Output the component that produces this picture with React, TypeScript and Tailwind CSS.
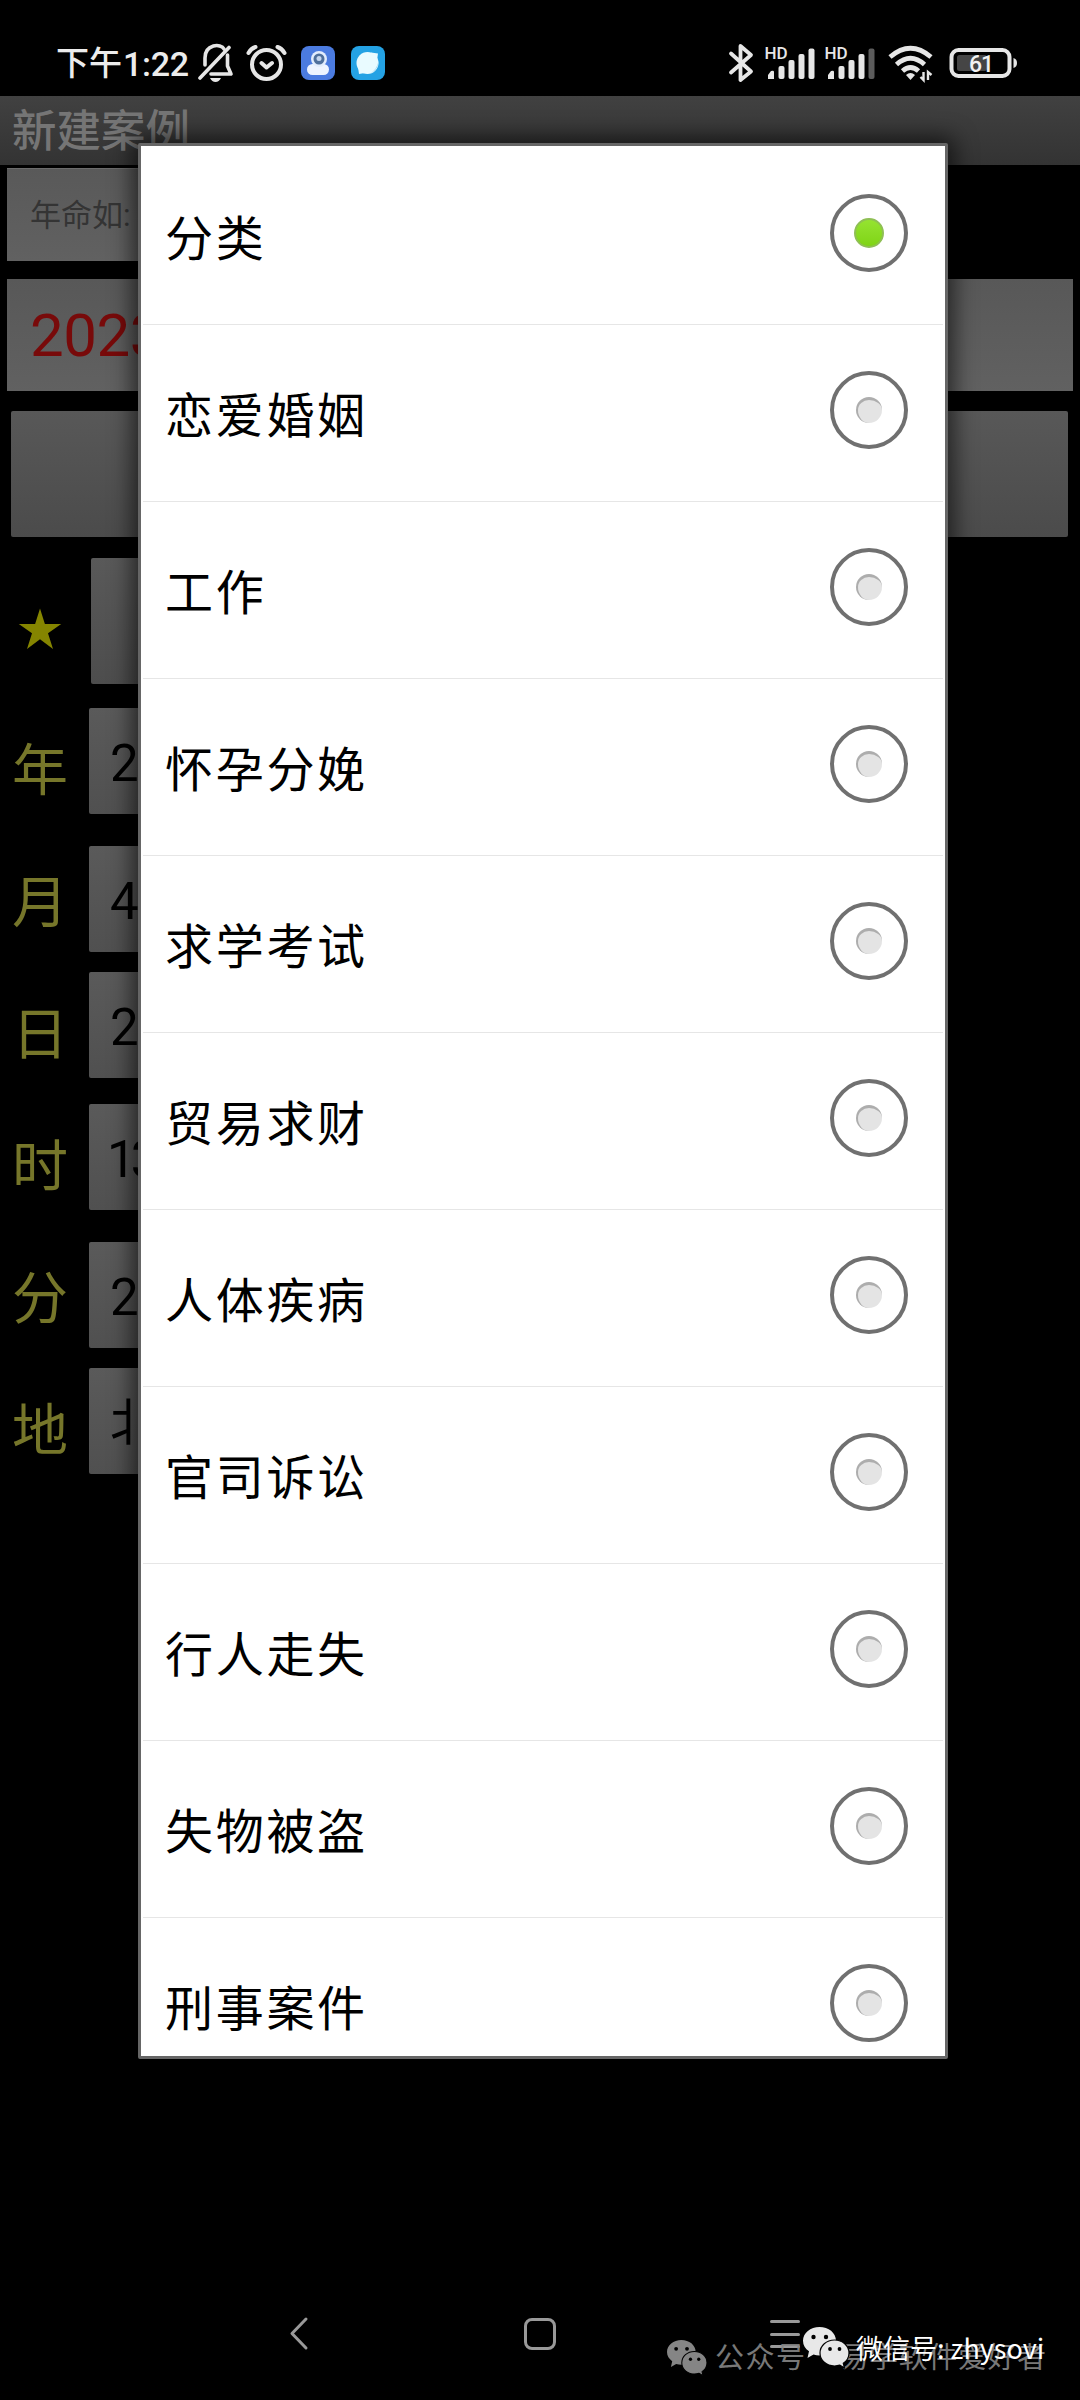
import clsx from 'clsx';

const options = [
  '分类',
  '恋爱婚姻',
  '工作',
  '怀孕分娩',
  '求学考试',
  '贸易求财',
  '人体疾病',
  '官司诉讼',
  '行人走失',
  '失物被盗',
  '刑事案件',
];

const fields = [
  { label: '年', value: '2023', gap: '' },
  { label: '月', value: '4', gap: 'mt-8' },
  { label: '日', value: '2', gap: 'mt-5' },
  { label: '时', value: '13', gap: 'mt-[26px] -indent-[3px] tracking-[-5px]' },
  { label: '分', value: '22', gap: 'mt-8' },
  { label: '地', value: '北京', gap: 'mt-5' },
];

function Signal({ weak }: { weak?: boolean }) {
  return (
    <svg width="52" height="40" viewBox="0 0 52 40" fill="#e6e6e6">
      <text x="-0.500" y="16" fontSize="17" fontWeight="500" fontFamily="Roboto, sans-serif">
        HD
      </text>
      <path d="M3 36v-4l3-4q3-1 3 1v7z" />
      <rect x="13.5" y="23" width="6" height="13" rx="2" />
      <rect x="23.5" y="17" width="6" height="19" rx="2" />
      <rect x="33.5" y="11" width="6" height="25" rx="2" />
      <rect x="43.5" y="5.5" width="6" height="30.5" rx="2" fill={weak ? '#5c5c5c' : '#e6e6e6'} />
    </svg>
  );
}

function StatusBar() {
  return (
    <header className="flex h-24 shrink-0 items-start bg-black pt-[43px] pl-[56px] text-[#ececec]">
      <div className="flex h-10 w-[142px] items-center pt-px text-[34px] leading-none font-medium whitespace-nowrap">
        <span className="text-[33px]">下午</span>
        <span className="ml-px tracking-[-0.300px]">1:22</span>
      </div>

      {/* muted bell */}
      <svg width="36" height="40" viewBox="0 0 36 40" fill="none" stroke="#e6e6e6" strokeWidth="3.6" strokeLinecap="round">
        <path d="M2 35L31 4.500" />
        <path d="M7 22V15C7 1 23 0 26 6" />
        <path d="M29.500 12V23L33 31H13" strokeLinejoin="round" />
        <path d="M12 35h11q-2 4-5.500 4t-5.500-4z" fill="#e6e6e6" stroke="none" />
      </svg>

      {/* alarm clock */}
      <svg className="ml-[12px]" width="41" height="40" viewBox="0 0 41 40" fill="none" stroke="#e6e6e6" strokeWidth="4" strokeLinecap="round" strokeLinejoin="round">
        <circle cx="20.500" cy="21.500" r="14.500" />
        <path d="M15.500 20l5 4.500L26 20M2.500 10Q5 5.500 9.500 4M38.500 10Q36 5.500 31.500 4" />
      </svg>

      <svg className="ml-[14px]" width="34" height="40" viewBox="0 0 34 40">
        <rect y="3" width="34" height="34" rx="8" fill="#4b7be0" />
        <rect x="6" y="21" width="22" height="11" rx="5.500" fill="#eef4ff" />
        <circle cx="18" cy="16" r="8" fill="#e2ecfc" />
        <circle cx="18" cy="16" r="5.500" fill="#50709c" />
        <circle cx="18" cy="15.500" r="2.500" fill="#c5d6ef" />
      </svg>
      <svg className="ml-[16px]" width="34" height="40" viewBox="0 0 34 40">
        <rect y="3" width="34" height="34" rx="8" fill="#24a2e4" />
        <circle cx="16.500" cy="20" r="11" fill="#e9fbff" />
        <path d="M20 9.500l7 1-1 7zM7 24l1 7 6-1z" fill="#e9fbff" />
        <path d="M27.500 20Q26 28 18 31 26 27 27.500 18z" fill="#a5d9f0" />
      </svg>

      {/* bluetooth */}
      <svg className="ml-[343px]" width="26" height="40" viewBox="0 0 26 40" fill="none" stroke="#e6e6e6" strokeWidth="3.800" strokeLinejoin="round" strokeLinecap="round">
        <path d="M3 10.500L23 28.500L12.500 37V3L23 12L3 29.500" />
      </svg>
      <div className="ml-[11px] flex gap-[8px]">
        <Signal />
        <Signal weak />
      </div>

      {/* wifi */}
      <svg className="ml-[11px]" width="46" height="40" viewBox="0 0 46 40" fill="none" stroke="#e6e6e6" strokeWidth="4.800">
        <path d="M2 14Q22.500-3.500 43 14" />
        <path d="M8.500 21.500Q22.500 9 36.500 21.500" />
        <path d="M14.500 28Q22.500 21 30.500 28" />
        <path d="M18 32q4.500-4 9 0l-4.500 5z" fill="#e6e6e6" stroke="none" />
        <path d="M35.500 29v8l-3-3M40 37v-8l3.500 3" strokeWidth="2.400" />
      </svg>

      {/* battery */}
      <svg className="ml-[15px]" width="70" height="40" viewBox="0 0 70 40">
        <rect x="2.500" y="7" width="58" height="26" rx="7" fill="none" stroke="#e6e6e6" strokeWidth="4" />
        <rect x="8" y="12" width="30" height="16" rx="2.500" fill="#454545" />
        <path d="M64.500 15q3.500 1 3.500 5t-3.500 5z" fill="#e6e6e6" />
        <text x="32" y="28.500" textAnchor="middle" fontSize="23" fontWeight="500" fontFamily="Roboto, sans-serif" fill="#f2f2f2" letterSpacing="-1">
          61
        </text>
      </svg>
    </header>
  );
}

function CaseForm() {
  return (
    <main className="flex flex-1 flex-col">
      <h1 className="flex h-[69px] shrink-0 items-center bg-linear-to-b from-[#414141] to-[#333333] pt-[3px] pl-[12px] text-[44.500px] leading-none font-medium text-[#757575]">
        新建案例
      </h1>
      <div className="mt-[3px] ml-[7px] flex h-[93px] w-[700px] items-center border-t border-[#6c6c6c] bg-linear-to-b from-[#595959] to-[#616161] pl-[23px] text-[31px] leading-none text-[#343434]">
        年命如: 1990
      </div>
      <div className="mt-[18px] mr-[7px] ml-[7px] flex h-[112px] items-center bg-linear-to-b from-[#585858] to-[#616161] pt-[2px] pl-[23px] text-[60px] leading-none tracking-[-0.500px] text-[#780a0a]">
        2023-04-02
      </div>
      <div className="mt-5 mr-3 ml-[11px] h-[126px] rounded-xs bg-linear-to-b from-[#585858] to-[#4b4b4b]" />

      <div className="mt-[21px] flex h-[126px]">
        <div className="w-[91px] pt-[47px] pl-[16px]">
          <svg width="48" height="48" viewBox="0 0 48 48" fill="#858500">
            <path d="M24 3.500L28.900 18.900H45.200L32 28.300L37 44L24 34.300L11 44L16 28.300L2.800 18.900H19.100Z" />
          </svg>
        </div>
        <div className="w-[700px] rounded-xs bg-linear-to-b from-[#595959] to-[#4d4d4d]" />
      </div>

      <div className="mt-6 flex">
        <div className="flex w-[89px] flex-col">
          {fields.map(({ label }) => (
            <span
              key={label}
              className="flex h-[132px] items-center pb-[7px] pl-[12px] text-[56px] leading-none text-[#76762a]"
            >
              {label}
            </span>
          ))}
        </div>
        <div className="flex w-[700px] flex-col">
          {fields.map(({ label, value, gap }) => (
            <div
              key={label}
              className={clsx(
                'flex h-[106px] items-center rounded-xs bg-linear-to-b from-[#5a5a5a] to-[#505050] pt-[4px] pl-[21px] text-[51px] leading-none text-black',
                gap,
              )}
            >
              {value}
            </div>
          ))}
        </div>
      </div>
    </main>
  );
}

function Radio({ checked }: { checked: boolean }) {
  return (
    <span className="flex size-[78px] items-center justify-center rounded-full border-4 border-[#707070]">
      {checked ? (
        <span className="size-[30px] rounded-full border-2 border-[#8fbf55] bg-linear-to-b from-[#95e330] to-[#80d414]" />
      ) : (
        <span className="size-[26px] rounded-full border-t-3 border-l-2 border-[#adadad] bg-[#e4e4e4]" />
      )}
    </span>
  );
}

function OptionDialog() {
  return (
    <div className="absolute top-[143px] left-[138px] h-[1916px] w-[810px] overflow-hidden rounded-xs border-[3px] border-[#666666] bg-white shadow-[0_0_22px_6px_rgba(0,0,0,0.6)]">
      <ul className="flex flex-col px-[2px] pt-[2px]">
        {options.map((option, i) => (
          <li
            key={option}
            className="flex h-[177px] shrink-0 items-center justify-between border-b border-[#e6e6e6] pr-[35px] pl-[22px]"
          >
            <span className="pt-[7px] text-[48px] leading-none tracking-[2.700px] text-black">{option}</span>
            <span className="pb-[7px]">
              <Radio checked={i === 0} />
            </span>
          </li>
        ))}
      </ul>
    </div>
  );
}

function NavBar() {
  return (
    <nav className="flex h-[132px] shrink-0 items-center pl-[288px]">
      <svg width="22" height="36" viewBox="0 0 22 36" fill="none" stroke="#999999" strokeWidth="3" strokeLinecap="round" strokeLinejoin="round">
        <path d="M18 3L4 17.500L18 32" />
      </svg>
      <div className="ml-[214px] size-8 rounded-[8px] border-[3px] border-[#999999]" />
      <div className="ml-[214px] flex h-7 w-[30px] flex-col justify-between">
        <span className="h-[3px] rounded-full bg-[#999999]" />
        <span className="h-[3px] rounded-full bg-[#999999]" />
        <span className="h-[3px] rounded-full bg-[#999999]" />
      </div>
    </nav>
  );
}

function WeChatLogo({ className }: { className: string }) {
  return (
    <svg className={className} viewBox="0 0 46 40" fill="currentColor">
      <path d="M16.500 0C7.500 0 0 6 0 13.700c0 4.500 2.300 8 6 10.600L4.500 31l6-3.500c2 .6 4 .9 6 .9 9 0 16.500-6.300 16.500-14.500S25.500 0 16.500 0z" />
      <path
        d="M31.500 13C23.500 13 17 18.500 17 26s6.500 13 14.500 13c2 0 3.700-.3 5.400-.8L41.500 41l-1.200-4.700C43.800 34 46 30 46 26c0-7.500-6.500-13-14.500-13z"
        stroke="#000"
        strokeWidth="1.200"
      />
      <g fill="#000">
        <circle cx="10.500" cy="10" r="2.200" />
        <circle cx="23" cy="10" r="2.200" />
        <circle cx="27" cy="22" r="1.900" />
        <circle cx="36.500" cy="22" r="1.900" />
      </g>
    </svg>
  );
}

function Watermarks() {
  return (
    <>
      <div className="absolute top-[2340px] left-[667px] flex items-center text-[#858585]">
        <WeChatLogo className="h-[35px] w-[40px] overflow-visible" />
        <span className="ml-[8px] pt-[2px] text-[29px] leading-none tracking-[1.500px] whitespace-nowrap opacity-90">
          公众号
        </span>
        <span className="w-[33px] text-center text-[29px] leading-none opacity-90">·</span>
        <span className="pt-[2px] text-[29px] leading-none tracking-[0.600px] whitespace-nowrap opacity-90">
          易学软件爱好者
        </span>
      </div>
      <div className="absolute top-[2327px] left-[803px] flex items-center text-[#e8e8e8]">
        <WeChatLogo className="h-[40px] w-[46px] overflow-visible" />
        <span className="ml-[7px] font-['Noto_Sans_CJK_SC',sans-serif] text-[27px] leading-none whitespace-nowrap text-white">
          微信号: zhysovi
        </span>
      </div>
    </>
  );
}

export default function App() {
  return (
    <div className="relative flex h-[2400px] w-[1080px] flex-col overflow-hidden bg-black font-[Roboto,'Noto_Sans_CJK_SC',sans-serif]">
      <StatusBar />
      <CaseForm />
      <NavBar />
      <OptionDialog />
      <Watermarks />
    </div>
  );
}
